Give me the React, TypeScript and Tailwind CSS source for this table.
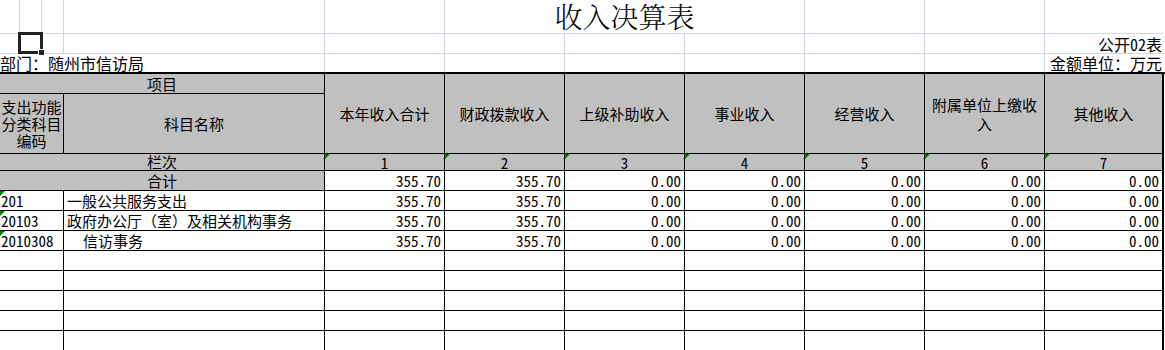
import React from "react";

const cjk = "font-['Noto_Sans_Mono_CJK_SC','Noto_Sans_CJK_SC',sans-serif]";
const num = "font-['Noto_Sans_Mono_CJK_SC','Liberation_Mono',monospace]";

const heads = ["本年收入合计", "财政拨款收入", "上级补助收入", "事业收入", "经营收入", "附属单位上缴收入", "其他收入"];

const rows = [
  { code: "201", name: "一般公共服务支出", indent: false, vals: ["355.70", "355.70", "0.00", "0.00", "0.00", "0.00", "0.00"] },
  { code: "20103", name: "政府办公厅（室）及相关机构事务", indent: false, vals: ["355.70", "355.70", "0.00", "0.00", "0.00", "0.00", "0.00"] },
  { code: "2010308", name: "信访事务", indent: true, vals: ["355.70", "355.70", "0.00", "0.00", "0.00", "0.00", "0.00"] },
];

const total = ["355.70", "355.70", "0.00", "0.00", "0.00", "0.00", "0.00"];

function Flag() {
  return <span className="absolute left-0 top-0 w-0 h-0 border-t-[5px] border-t-[#008000] border-r-[5px] border-r-transparent" />;
}

// black table cell: right + bottom borders, last column gets the thick edge
function cellCls(i: number) {
  return i === 6 ? "border-r-2 border-b border-black" : "border-r border-b border-black";
}

export default function App() {
  const gl = "border-r border-b border-[#d0d7e5]";
  return (
    <div className={`w-[1165px] h-[350px] overflow-hidden bg-white text-black text-[15px] ${cjk}`}>
      {/* sheet top area */}
      <div className="relative grid grid-cols-[20px_22px_22px_261px_120px_120px_120px_120px_120px_120px_119px] grid-rows-[34px_20px_18px]">
        <div className={gl} />
        <div className={gl} />
        <div className={gl} />
        <div className={gl} />
        <div className={gl} />
        <div className={`col-span-3 ${gl} flex items-end justify-center`}>
          <span className="text-[28px] leading-[33px] font-['Noto_Serif_CJK_SC','Noto_Sans_CJK_SC',serif] font-light">收入决算表</span>
        </div>
        <div className={gl} />
        <div className={gl} />
        <div className="border-b border-[#d0d7e5]" />

        <div className={gl} />
        <div className={gl} />
        <div className={gl} />
        <div className={gl} />
        <div className={gl} />
        <div className={gl} />
        <div className={gl} />
        <div className={gl} />
        <div className={gl} />
        <div className={gl} />
        <div className="border-b border-[#d0d7e5] flex items-end justify-end pr-[2px] text-[16px] leading-[18px] whitespace-nowrap">公开02表</div>

        <div className="col-span-4 border-r border-[#d0d7e5] flex items-end text-[16px] leading-[17px] whitespace-nowrap">部门：随州市信访局</div>
        <div className="border-r border-[#d0d7e5]" />
        <div className="border-r border-[#d0d7e5]" />
        <div className="border-r border-[#d0d7e5]" />
        <div className="border-r border-[#d0d7e5]" />
        <div className="border-r border-[#d0d7e5]" />
        <div className="border-r border-[#d0d7e5]" />
        <div className="flex items-end justify-end pr-[2px] text-[16px] leading-[17px] whitespace-nowrap">金额单位：万元</div>

        {/* active cell cursor */}
        <div className="absolute left-[18px] top-[32px] w-[25px] h-[22px] border-[3px] border-[#222]" />
        <div className="absolute left-[39px] top-[50px] w-[5px] h-[5px] bg-[#222] outline outline-1 outline-white" />
      </div>

      {/* table */}
      <div className="border-t-2 border-black grid grid-cols-[64px_261px_120px_120px_120px_120px_120px_120px_119px] grid-rows-[20px_60px_17px_20px_repeat(8,20px)]">
        <div className="col-span-2 bg-[#c0c0c0] border-r border-b border-black flex items-center justify-center leading-[19px]">项目</div>
        {heads.map((h, i) => (
          <div key={h} className={`row-span-2 bg-[#c0c0c0] ${cellCls(i)} flex items-center justify-center text-center px-[2px] leading-[19px]`}>
            <span className="block w-[105px]">{h}</span>
          </div>
        ))}
        <div className="bg-[#c0c0c0] border-r border-b border-black flex items-center justify-center text-center leading-[17px]">
          <span className="block w-[60px]">支出功能分类科目编码</span>
        </div>
        <div className="bg-[#c0c0c0] border-r border-b border-black flex items-center justify-center leading-[19px]">科目名称</div>

        <div className="col-span-2 bg-[#c0c0c0] border-r border-b border-black flex items-end justify-center leading-[16px]">栏次</div>
        {heads.map((h, i) => (
          <div key={"n" + h} className={`relative bg-[#c0c0c0] ${cellCls(i)} flex items-end justify-center leading-[15px] ${num}`}>
            <Flag />
            {i + 1}
          </div>
        ))}

        <div className="col-span-2 bg-[#c0c0c0] border-r border-b border-black flex items-end justify-center leading-[19px]">合计</div>
        {total.map((v, i) => (
          <div key={"t" + i} className={`${cellCls(i)} flex items-end justify-end pr-[3px] leading-[18px] ${num}`}>{v}</div>
        ))}

        {rows.map((r) => (
          <React.Fragment key={r.code}>
            <div className={`relative border-r border-b border-black flex items-end pl-[1px] leading-[18px] ${num}`}>
              <Flag />
              {r.code}
            </div>
            <div className={`border-r border-b border-black flex items-end leading-[19px] whitespace-nowrap ${r.indent ? "pl-[19px]" : "pl-[3px]"}`}>{r.name}</div>
            {r.vals.map((v, i) => (
              <div key={r.code + i} className={`${cellCls(i)} flex items-end justify-end pr-[3px] leading-[18px] ${num}`}>{v}</div>
            ))}
          </React.Fragment>
        ))}

        {[0, 1, 2, 3, 4].map((k) => (
          <React.Fragment key={"e" + k}>
            <div className="border-r border-b border-black" />
            <div className="border-r border-b border-black" />
            {heads.map((h, i) => (
              <div key={"e" + k + h} className={cellCls(i)} />
            ))}
          </React.Fragment>
        ))}
      </div>
    </div>
  );
}
